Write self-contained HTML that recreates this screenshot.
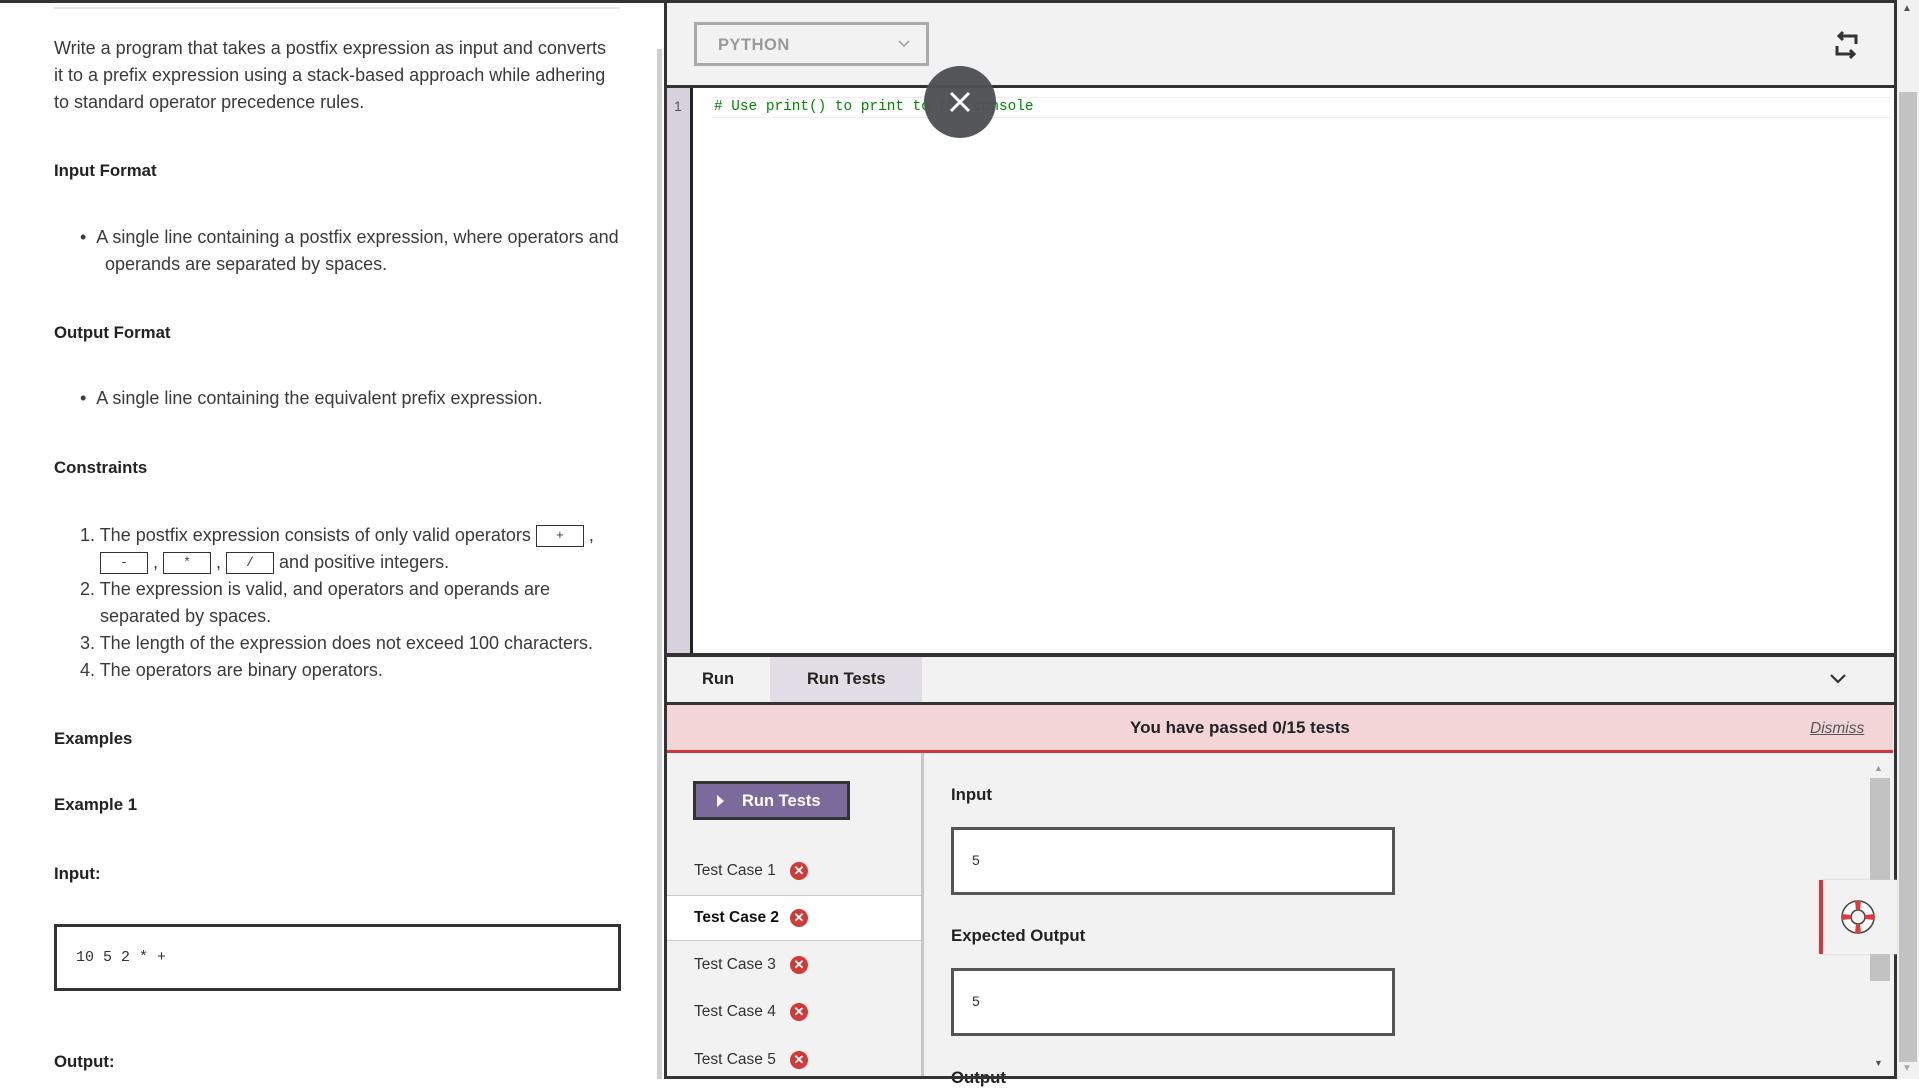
<!DOCTYPE html>
<html><head><meta charset="utf-8">
<style>
*{margin:0;padding:0;box-sizing:border-box}
body{width:1919px;height:1079px;overflow:hidden;background:#fff;font-family:"Liberation Sans",Arial,sans-serif;color:#333;position:relative}
.a{position:absolute;white-space:nowrap}
.t{font-size:18px;color:#3a3a3a}
.h{font-size:16.8px;font-weight:bold;color:#222}
.code{display:inline-block;border:1px solid #333;height:22px;vertical-align:middle;text-align:center;font-family:"Liberation Mono",monospace;font-size:13px;line-height:20px;background:#fff}
.tc{font-size:15.5px;color:#333}
.x{position:absolute;width:18px;height:18px;border-radius:50%;background:#d23a3a;color:#fff;font-size:13px;font-weight:bold;text-align:center;line-height:18px}
</style></head><body>
<div class="a" style="left:0;top:0;width:1919px;height:3px;background:#333"></div>
<!-- left panel -->
<div class="a" style="left:54px;top:7px;width:566px;height:2px;background:#e6e6e6"></div>
<div class="a t" style="left:54px;top:35px;line-height:27px">Write a program that takes a postfix expression as input and converts<br>it to a prefix expression using a stack-based approach while adhering<br>to standard operator precedence rules.</div>
<div class="a h" style="left:54px;top:161px">Input Format</div>
<div class="a t" style="left:80px;top:224px;line-height:27px">•&nbsp;&nbsp;A single line containing a postfix expression, where operators and<br>&nbsp;&nbsp;&nbsp;&nbsp;&nbsp;operands are separated by spaces.</div>
<div class="a h" style="left:54px;top:323px">Output Format</div>
<div class="a t" style="left:80px;top:388px">•&nbsp;&nbsp;A single line containing the equivalent prefix expression.</div>
<div class="a h" style="left:54px;top:458px">Constraints</div>
<div class="a t" style="left:80px;top:522px;line-height:27px">1. The postfix expression consists of only valid operators <span class="code" style="width:48px">+</span> ,<br>&nbsp;&nbsp;&nbsp;&nbsp;<span class="code" style="width:48px">-</span> , <span class="code" style="width:48px">*</span> , <span class="code" style="width:48px">/</span> and positive integers.<br>2. The expression is valid, and operators and operands are<br>&nbsp;&nbsp;&nbsp;&nbsp;separated by spaces.<br>3. The length of the expression does not exceed 100 characters.<br>4. The operators are binary operators.</div>
<div class="a h" style="left:54px;top:729px">Examples</div>
<div class="a h" style="left:54px;top:795px">Example 1</div>
<div class="a h" style="left:54px;top:864px">Input:</div>
<div class="a" style="left:54px;top:924px;width:567px;height:67px;border:3px solid #333;font-family:'Liberation Mono',monospace;font-size:15px;padding:22px 0 0 19px;color:#333">10 5 2 * +</div>
<div class="a h" style="left:54px;top:1052px">Output:</div>
<div class="a" style="left:657px;top:49px;width:5px;height:1030px;background:#d0d0d0"></div>
<!-- editor -->
<div class="a" style="left:664px;top:3px;width:1233px;height:1076px;border-left:3px solid #333;border-right:3px solid #333;background:#f2f2f2"></div>
<div class="a" style="left:694px;top:22px;width:235px;height:44px;border:3px solid #aaa;background:#f2f2f2;color:#999;font-size:16.5px;font-weight:bold;padding:11px 0 0 21px;letter-spacing:.5px">PYTHON<svg style="position:absolute;right:16px;top:15px" width="12" height="8"><path d="M1 1l5 5 5-5" fill="none" stroke="#999" stroke-width="1.5"/></svg></div>
<svg class="a" style="left:1832px;top:30px" width="30" height="30" viewBox="0 0 30 30"><path d="M24 14V6H7M11 2L7 6l4 4M5 16v8h17M18 20l4 4-4 4" fill="none" stroke="#333" stroke-width="3"/></svg>
<div class="a" style="left:664px;top:85px;width:1233px;height:3px;background:#333"></div>
<div class="a" style="left:667px;top:88px;width:23px;height:566px;background:#d6d1dc;color:#555;font-size:14px;padding:10px 0 0 7px">1</div>
<div class="a" style="left:690px;top:88px;width:3px;height:566px;background:#222"></div>
<div class="a" style="left:693px;top:88px;width:1201px;height:566px;background:#fff"></div>
<div class="a" style="left:712px;top:97px;width:1180px;height:21px;border:1px solid #eee;border-left:none;border-right:none"></div>
<div class="a" style="left:714px;top:99px;font-family:'Liberation Mono',monospace;font-size:14.4px;color:#008800">#&nbsp;Use print() to print to the console</div>
<div class="a" style="left:924px;top:66px;width:72px;height:72px;border-radius:50%;background:#4e5155;opacity:.97"></div>
<svg class="a" style="left:946px;top:88px" width="28" height="28"><path d="M5 5L23 23M23 5L5 23" stroke="#fff" stroke-width="3"/></svg>
<div class="a" style="left:664px;top:653px;width:1233px;height:4px;background:#333"></div>
<!-- tabs -->
<div class="a" style="left:702px;top:670px;font-size:16.5px;font-weight:bold;color:#222">Run</div>
<div class="a" style="left:770px;top:657px;width:152px;height:46px;background:#e0dde6;font-size:16.5px;font-weight:bold;color:#222;padding:13px 0 0 37px">Run Tests</div>
<svg class="a" style="left:1829px;top:673px" width="18" height="12"><path d="M2 2l7 7 7-7" fill="none" stroke="#333" stroke-width="2.2"/></svg>
<div class="a" style="left:664px;top:702px;width:1233px;height:3px;background:#333"></div>
<div class="a" style="left:667px;top:705px;width:1226px;height:46px;background:#f3d5d8"></div>
<div class="a" style="left:1130px;top:718px;font-size:17px;font-weight:bold;color:#222">You have passed 0/15 tests</div>
<div class="a" style="left:1810px;top:720px;font-size:15.5px;font-style:italic;text-decoration:underline;color:#555">Dismiss</div>
<div class="a" style="left:667px;top:750px;width:1226px;height:3px;background:#d03a3a"></div>
<!-- lower -->
<div class="a" style="left:921px;top:753px;width:3px;height:326px;background:#c8c8c8"></div>
<div class="a" style="left:693px;top:781px;width:157px;height:39px;background:#7b6a9b;border:3px solid #333;color:#fff;font-size:16.5px;font-weight:bold;padding:8px 0 0 46px">Run Tests</div>
<svg class="a" style="left:716px;top:794px" width="10" height="14"><path d="M1 1L8 7 1 13z" fill="#fff"/></svg>
<div class="a" style="left:667px;top:895px;width:254px;height:46px;background:#fff;border-top:1px solid #ccc;border-bottom:1px solid #ccc"></div>
<div class="a tc" style="left:694px;top:862px">Test Case 1</div><div class="x" style="left:790px;top:862px">✕</div>
<div class="a tc" style="left:694px;top:909px;font-weight:bold;color:#111">Test Case 2</div><div class="x" style="left:790px;top:909px">✕</div>
<div class="a tc" style="left:694px;top:956px">Test Case 3</div><div class="x" style="left:790px;top:956px">✕</div>
<div class="a tc" style="left:694px;top:1003px">Test Case 4</div><div class="x" style="left:790px;top:1003px">✕</div>
<div class="a tc" style="left:694px;top:1051px">Test Case 5</div><div class="x" style="left:790px;top:1051px">✕</div>
<div class="a h" style="left:951px;top:785px">Input</div>
<div class="a" style="left:951px;top:827px;width:444px;height:68px;background:#fff;border:3px solid #555;font-size:14px;padding:22px 0 0 18px;color:#333">5</div>
<div class="a h" style="left:951px;top:926px">Expected Output</div>
<div class="a" style="left:951px;top:968px;width:444px;height:68px;background:#fff;border:3px solid #555;font-size:14px;padding:22px 0 0 18px;color:#333">5</div>
<div class="a h" style="left:951px;top:1068px">Output</div>
<div class="a" style="left:1870px;top:778px;width:20px;height:203px;background:#c2c2c2"></div>
<div class="a" style="left:1874px;top:763px;font-size:9px;color:#999">▲</div>
<div class="a" style="left:1874px;top:1058px;font-size:9px;color:#555">▼</div>
<div class="a" style="left:664px;top:1076px;width:1233px;height:3px;background:#333"></div>
<!-- page scrollbar -->
<div class="a" style="left:1897px;top:0;width:22px;height:1079px;background:#f1f1f1"></div>
<div class="a" style="left:1899px;top:92px;width:18px;height:970px;background:#c2c2c2"></div>
<div class="a" style="left:1902px;top:3px;font-size:10px;color:#555">▲</div>
<div class="a" style="left:1902px;top:1063px;font-size:10px;color:#aaa">▼</div>
<!-- help -->
<div class="a" style="left:1819px;top:880px;width:78px;height:74px;background:#f2f2f2;border-left:4px solid #d03a3a;box-shadow:0 0 2px #ccc"></div>
<svg class="a" style="left:1840px;top:899px" width="36" height="36" viewBox="0 0 36 36"><circle cx="18" cy="18" r="16" fill="#fff" stroke="#444" stroke-width="1.5"/><circle cx="18" cy="18" r="7" fill="#f2f2f2" stroke="#444" stroke-width="1.5"/><path d="M15 2h6l-1 9h-4zM15 34h6l-1-9h-4zM2 15v6l9-1v-4zM34 15v6l-9-1v-4z" fill="#e8363a"/></svg>
</body></html>
